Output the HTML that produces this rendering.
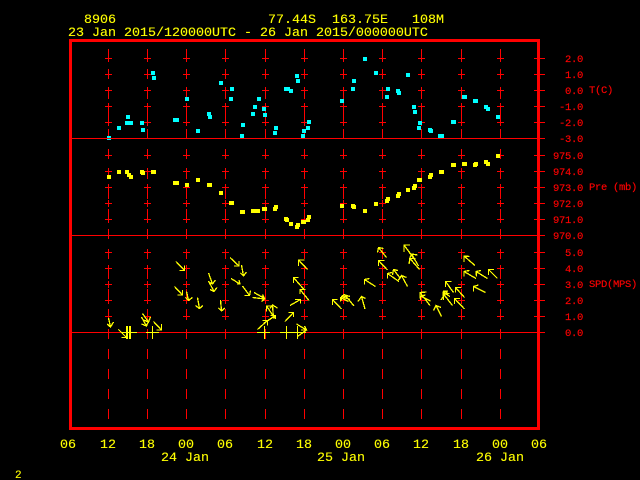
<!DOCTYPE html>
<html lang="en">
<head>
<meta charset="utf-8">
<title>8906 station plot</title>
<style>
html,body{margin:0;padding:0;background:#000;width:640px;height:480px;overflow:hidden}
svg{display:block}
text{font-family:"Liberation Mono",monospace;white-space:pre}
.y{fill:#ff0;stroke:#ff0;stroke-width:.12px;font-size:13.33px}
.r{fill:#f00;stroke:#f00;stroke-width:.15px;font-size:10.5px;letter-spacing:-.3px}
</style>
</head>
<body>
<svg width="640" height="480" viewBox="0 0 640 480" xmlns="http://www.w3.org/2000/svg">
<rect width="640" height="480" fill="#000"/>
<defs>
<g id="c" fill="none" stroke="#f00" stroke-width="1" shape-rendering="crispEdges">
<path d="M.5 49V419" stroke-dasharray="10 10"/>
<path d="M-3 58.5h7M.5 55v7M-3 74.5h7M.5 71v7M-3 90.5h7M.5 87v7M-3 106.5h7M.5 103v7M-3 122.5h7M.5 119v7M-3 155.5h7M.5 152v7M-3 171.5h7M.5 168v7M-3 187.5h7M.5 184v7M-3 203.5h7M.5 200v7M-3 219.5h7M.5 216v7M-3 252.5h7M.5 249v7M-3 268.5h7M.5 265v7M-3 284.5h7M.5 281v7M-3 300.5h7M.5 297v7M-3 316.5h7M.5 313v7"/>
</g>
</defs>
<use href="#c" x="108"/><use href="#c" x="147"/><use href="#c" x="186"/><use href="#c" x="225"/><use href="#c" x="265"/><use href="#c" x="304"/><use href="#c" x="343"/><use href="#c" x="382"/><use href="#c" x="421"/><use href="#c" x="461"/><use href="#c" x="500"/>

<!-- temperature points -->
<path fill="none" stroke="#0ff" stroke-width="4" shape-rendering="crispEdges" d="M107 138h4M117 128h4M126 117h4M125 123h4M129 123h4M140 123h4M141 130h4M151 73h4M152 78h4M173 120h4M175 120h4M185 99h4M196 131h4M207 114h4M208 117h4M219 83h4M230 89h4M229 99h4M241 125h4M240 136h4M251 114h4M253 107h4M257 99h4M262 109h4M263 115h4M274 128h4M273 133h4M284 89h4M286 89h4M289 91h4M295 76h4M296 81h4M301 136h4M302 131h4M306 128h4M307 122h4M340 101h4M351 89h4M352 81h4M363 59h4M374 73h4M385 97h4M386 89h4M396 91h4M397 93h4M406 75h4M412 107h4M413 112h4M418 123h4M417 128h4M428 130h4M429 131h4M438 136h4M440 136h4M451 122h4M452 122h4M462 97h4M463 97h4M473 101h4M474 101h4M484 107h4M486 109h4M496 117h4"/>

<!-- panel lines and right ticks -->
<path fill="none" stroke="#f00" stroke-width="1" shape-rendering="crispEdges" d="M72 138.5H545M72 235.5H545M72 332.5H545M534 58.5h11M534 74.5h11M534 90.5h11M534 106.5h11M534 122.5h11M534 155.5h11M534 171.5h11M534 187.5h11M534 203.5h11M534 219.5h11M534 252.5h11M534 268.5h11M534 284.5h11M534 300.5h11M534 316.5h11"/>

<!-- pressure points -->
<path fill="none" stroke="#ff0" stroke-width="4" shape-rendering="crispEdges" d="M107 177h4M117 172h4M125 172h4M127 175h4M129 177h4M140 172h4M141 173h4M151 172h4M152 172h4M173 183h4M175 183h4M185 185h4M196 180h4M207 185h4M208 185h4M219 193h4M229 203h4M230 203h4M240 212h4M241 212h4M251 211h4M253 211h4M256 211h4M262 209h4M263 209h4M273 209h4M274 207h4M284 219h4M285 220h4M289 224h4M295 227h4M296 225h4M301 222h4M302 222h4M306 220h4M307 217h4M340 206h4M351 206h4M352 207h4M363 211h4M374 204h4M385 201h4M386 199h4M396 196h4M397 194h4M406 190h4M412 188h4M413 186h4M417 180h4M418 180h4M428 177h4M429 175h4M439 172h4M440 172h4M451 165h4M452 165h4M462 164h4M463 164h4M473 165h4M474 164h4M484 162h4M486 164h4M496 156h4"/>

<!-- calm wind markers -->
<path fill="none" stroke="#ff0" stroke-width="1" shape-rendering="crispEdges" d="M122 332.5H137M146 332.5H159M152.5 326V339M257 332.5H270M264.5 326V339M280 332.5H306M286.5 326V339M297.5 326V339"/>
<path fill="none" stroke="#ff0" stroke-width="2" shape-rendering="crispEdges" d="M127 326V339M130 326V339"/>

<!-- wind arrows -->
<path fill="none" stroke="#ff0" stroke-width="1.3" shape-rendering="crispEdges" d="
M108.5 318L110.5 327m-3.5 -3l3.5 3l3 -5
M118.5 329.5L126.5 337.5m-5 0l5 0l0 -5
M142.5 313.5L148.5 322m-5 -2l5 2l2 -5
M141.5 317L146.5 326m-5 -2l5 2l2 -5
M153.5 321.5L161.5 330m-5 0l5 0l0 -6
M176 261.5L184.5 270.5m-5 0l5 0l0 -5
M174.5 286.5L182.5 295m-5 0l5 0l0 -5
M186.5 291.5L188.5 300.5m-3 -3l3 3l4 -3
M197.5 297.5L199.5 308.5m-4 -3l4 3l3.5 -3
M208.5 273L212.5 284m-4 -2l4 2l3 -4
M208.5 281L214 291.5m-4 -2l4 2l3 -4
M220.5 300L221.5 311m-3 -3l3 3l3.5 -3
M230 257.5L239 266m-5 0l5 0l0 -5
M241.5 265L243.5 276m-3 -3l3 3l3 -4
M231 278.5L240 284m-3 0l3 0l-1 -4
M242.5 286L249.5 295.5m-5 0l5 0l1 -5
M252.5 297.5L264.5 299m-3 2.5l3 -2.5l-3 -3
M254 292.5L264.5 298.5m-5 0l5 0l-2 -4
M257.5 329.5L267.5 320.5m-5 0l5 0l0 5
M263.5 323.5L275.5 315.5m-5 0l5 0l0 3.5
M275 318.5L266.5 306m0 5.5l0 -5.5l5 0
M273.5 318.5L272.5 305m-2.5 3.5l2.5 -3.5l5 3
M285 321.5L293.5 312.5m-5 0l5 0l0 4.5
M290 305.5L300.5 299.5m-5.5 0l5.5 0l0 4
M307.5 269.5L298.5 260m0 6l0 -6l6 0
M304.5 290L293.5 277.5m0 5.5l0 -5.5l5 0
M309 300.5L300 289.5m0 4.5l0 -4.5l5.5 0
M296.5 324L306.5 330m-5.5 0l5.5 0l-2 -4M297.5 336.5L306.5 330
M341.5 309L332.5 299.5m0 5.5l0 -5.5l5 0
M354 306L345 295m0 4.5l0 -4.5l5 1.5
M348.5 301.5L340.5 297.5m0 4l0 -4l5 -1
M350 299.5L341.5 296.5m0 4l0 -4l3 -2
M365 309L361.5 296.5m-3.5 5l3.5 -5l4 2
M375.5 286.5L364.5 279.5m0 5l0 -5l5 -1
M387.5 270L378.5 260.5m0 5.5l0 -5.5l6 0
M386.5 257.5L378.5 247.5m-1 5l1 -5l5 1
M399 281.5L387.5 273.5m0 5l0 -5l4.5 -1
M400.5 278.5L393.5 269.5m-1 5.5l1 -5.5l4.5 1
M407.5 286.5L401.5 275.5m-3 4.5l3 -4.5l5 2
M415 260L404 245m0 7l0 -7l6 0
M419.5 269.5L410 258.5m-1 5.5l1 -5.5l5.5 0
M418.5 266L411.5 254m-2 5l2 -5l6 1
M430 305.5L420 292.5m0 6l0 -6l6.5 -.5
M430.5 301L420.5 296m0 4l0 -4l5 -1
M441.5 316.5L436 305.5m-2.5 5l2.5 -5l5 2
M475 265.5L464 256m0 6l0 -6l5.5 .5
M476 278.5L464 271.5m0 5l0 -5l5.5 -1
M487.5 278.5L476 271.5m.5 5l-.5 -5l5 -1
M497.5 278.5L488.5 269.5m0 5.5l0 -5.5l5.5 0
M485.5 292.5L473.5 286.5m0 5l0 -5l5 -1.5
M453.5 292.5L445.5 281.5m0 5.5l0 -5.5l6 0
M464.5 297.5L455.5 287.5m0 5l0 -5l5.5 0
M464.5 309L454.5 298.5m0 5.5l0 -5.5l5.5 0
M452.5 305.5L443.5 294m0 6l0 -6l6 -.5
M450 296.5L443 292m0 4l0 -4l5 -1
M441 300L447 291m-4 0l4 0l0 4"/>

<!-- frame -->
<rect x="70.5" y="40.5" width="468" height="388" fill="none" stroke="#f00" stroke-width="3" shape-rendering="crispEdges"/>

<!-- title -->
<text class="y" x="84" y="23">8906</text>
<text class="y" x="268" y="23">77.44S</text>
<text class="y" x="332" y="23">163.75E</text>
<text class="y" x="412" y="23">108M</text>
<text class="y" x="68" y="36">23 Jan 2015/120000UTC - 26 Jan 2015/000000UTC</text>

<!-- right axis labels -->
<text class="r" x="565" y="62">2.0</text>
<text class="r" x="565" y="78">1.0</text>
<text class="r" x="565" y="94">0.0</text>
<text class="r" x="559" y="110">-1.0</text>
<text class="r" x="559" y="126">-2.0</text>
<text class="r" x="559" y="142">-3.0</text>
<text class="r" x="553" y="159">975.0</text>
<text class="r" x="553" y="175">974.0</text>
<text class="r" x="553" y="191">973.0</text>
<text class="r" x="553" y="207">972.0</text>
<text class="r" x="553" y="223">971.0</text>
<text class="r" x="553" y="239">970.0</text>
<text class="r" x="565" y="256">5.0</text>
<text class="r" x="565" y="272">4.0</text>
<text class="r" x="565" y="288">3.0</text>
<text class="r" x="565" y="304">2.0</text>
<text class="r" x="565" y="320">1.0</text>
<text class="r" x="565" y="336">0.0</text>
<text class="r" x="589" y="93">T(C)</text>
<text class="r" x="589" y="190">Pre (mb)</text>
<text class="r" x="589" y="287">SPD(MPS)</text>

<!-- bottom axis labels -->
<text class="y" x="60" y="448">06</text>
<text class="y" x="100" y="448">12</text>
<text class="y" x="139" y="448">18</text>
<text class="y" x="178" y="448">00</text>
<text class="y" x="217" y="448">06</text>
<text class="y" x="257" y="448">12</text>
<text class="y" x="296" y="448">18</text>
<text class="y" x="335" y="448">00</text>
<text class="y" x="374" y="448">06</text>
<text class="y" x="413" y="448">12</text>
<text class="y" x="453" y="448">18</text>
<text class="y" x="492" y="448">00</text>
<text class="y" x="531" y="448">06</text>
<text class="y" x="161" y="461">24 Jan</text>
<text class="y" x="317" y="461">25 Jan</text>
<text class="y" x="476" y="461">26 Jan</text>
<text class="y" x="15" y="478" style="font-size:11px">2</text>
</svg>
</body>
</html>
